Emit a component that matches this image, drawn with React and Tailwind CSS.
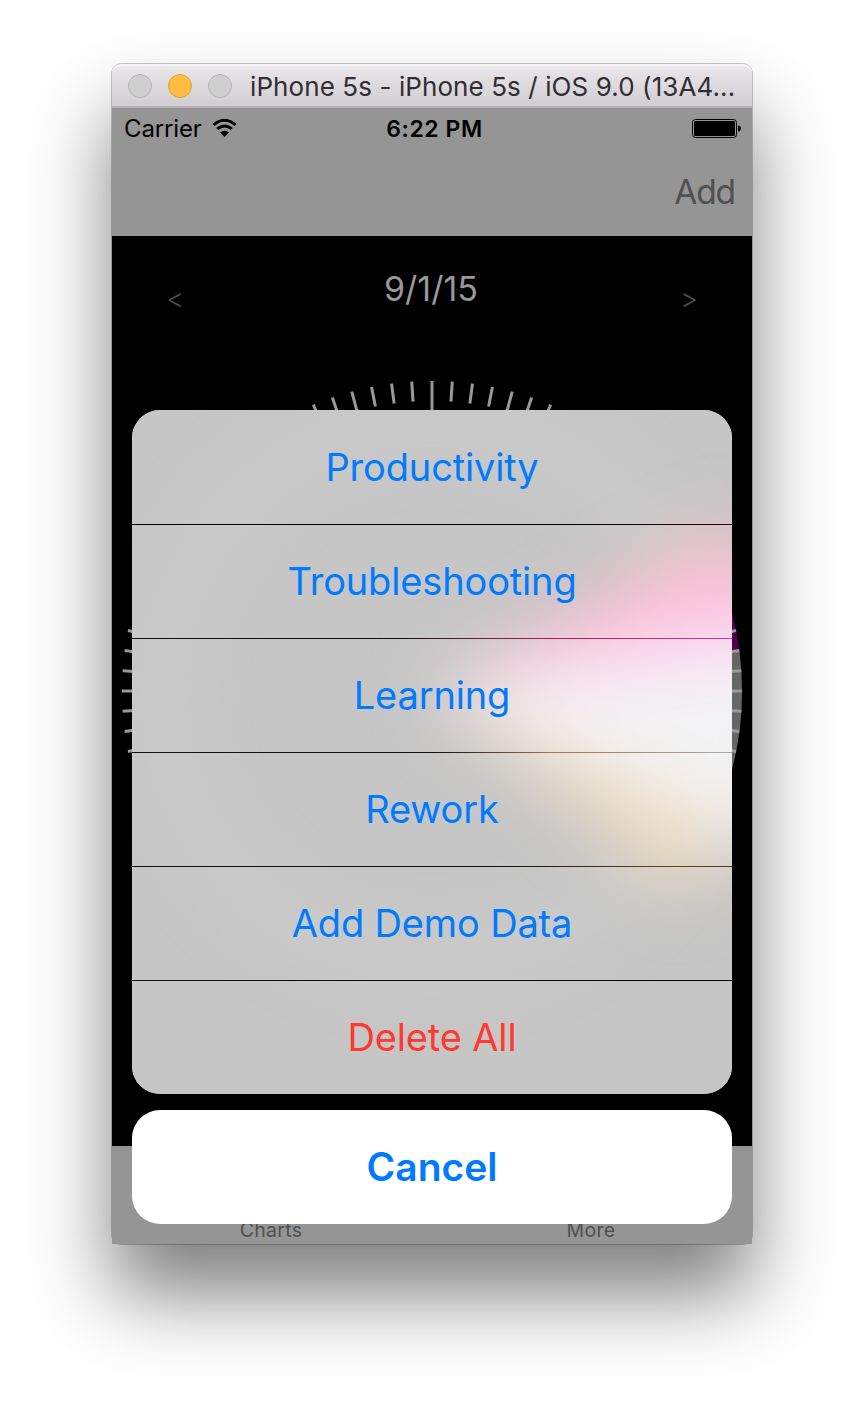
import React from "react";

const CX = 320;
const CY = 455;

function polar(radius, degrees) {
  const a = (degrees * Math.PI) / 180;
  return [CX + radius * Math.cos(a), CY + radius * Math.sin(a)];
}

function wedge(from, to, radius = 310) {
  const [x1, y1] = polar(radius, from);
  const [x2, y2] = polar(radius, to);
  return `M${CX} ${CY}L${x1} ${y1}A${radius} ${radius} 0 0 1 ${x2} ${y2}Z`;
}

function Dial() {
  const ticks = Array.from({ length: 96 }, (_, i) => i);
  return (
    <svg className="absolute inset-0" width="640" height="910" viewBox="0 0 640 910" aria-hidden="true">
      <path d={wedge(-17, -7.5)} fill="#4f004f" />
      <path d={wedge(-7.5, 22)} fill="#666666" />
      {ticks.map((i) => {
        const angle = i * 3.75;
        const [x1, y1] = polar(310, angle);
        const [x2, y2] = polar(i % 24 === 0 ? 270 : 290, angle);
        return <line key={i} x1={x1} y1={y1} x2={x2} y2={y2} stroke="#999999" strokeWidth="3" />;
      })}
    </svg>
  );
}

function SheetBackdrop() {
  return (
    <svg className="absolute inset-0" width="600" height="684" viewBox="20 174 600 684" aria-hidden="true">
      <defs>
        <filter id="soft" x="-50%" y="-60%" width="200%" height="220%">
          <feGaussianBlur stdDeviation="34" />
        </filter>
        <filter id="ring" x="-50%" y="-50%" width="200%" height="200%">
          <feGaussianBlur stdDeviation="26" />
        </filter>
      </defs>
      <rect x="20" y="174" width="600" height="684" fill="#c6c6c6" />
      <circle cx={CX} cy={CY} r="270" fill="none" stroke="#cbcbcb" strokeWidth="50" filter="url(#ring)" />
      <g filter="url(#soft)">
        <path d={wedge(-29, -12, 345)} fill="#ffbfcf" />
        <path d={wedge(-17, -6, 390)} fill="#fdc8ee" />
        <path d={wedge(-8, 27, 370)} fill="#f3f3f4" />
        <path d={wedge(24, 39, 325)} fill="#efdcc0" />
      </g>
    </svg>
  );
}

function SheetAction({ label, className = "text-[#007aff]", line = "" }) {
  return (
    <button
      type="button"
      className={`relative flex h-[114px] w-full items-center justify-center pb-px text-[38px] leading-none font-normal tracking-[-0.15px] ${className}`}
    >
      <span>{label}</span>
      {line && <i className={`absolute inset-x-0 bottom-[-1px] z-10 h-px bg-linear-to-r ${line}`} />}
    </button>
  );
}

export default function App() {
  return (
    <main className="flex h-[1404px] w-[864px] justify-center overflow-hidden bg-white pt-16 font-['Inter',sans-serif]">
      <div className="h-[1180px] w-[640px] rounded-[10px] bg-[#959595] shadow-[0_0_0_1px_rgba(0,0,0,0.22),0_50px_80px_rgba(0,0,0,0.5)]">
        <header className="flex h-11 items-center rounded-t-[9px] border-b-2 border-[#b4b1b4] bg-linear-to-b from-[#ebe8eb] to-[#d1ced1] pt-0.5 pl-4 shadow-[inset_0_2px_0_#f5f4f5]">
          <div className="flex gap-4">
            <i className="size-6 rounded-full border border-[#b4b4b4] bg-[#cfcfcf]" />
            <i className="size-6 rounded-full border border-[#dfa034] bg-[#ffbe41]" />
            <i className="size-6 rounded-full border border-[#b4b4b4] bg-[#cfcfcf]" />
          </div>
          <h1 className="ml-[18px] whitespace-nowrap pt-0.5 text-[26px] leading-8 font-normal tracking-[0.09px] text-[#302e32]">
            iPhone 5s - iPhone 5s / iOS 9.0 (13A4...
          </h1>
        </header>

        <div className="relative h-[1136px]">
          <div className="h-32 bg-[#959595]">
            <div className="grid h-[42px] grid-cols-3 items-center pr-[11px] pl-3 text-black">
              <div className="flex items-center gap-[10px] text-[24px]">
                <span className="tracking-[-0.15px]">Carrier</span>
                <svg width="26" height="20" viewBox="0 0 26 20" fill="none" aria-hidden="true">
                  <path d="M1.500 6C8 -.3 17 -.3 23.500 6" stroke="#000" strokeWidth="3" />
                  <path d="M5.300 10C9.500 5.900 15.500 5.900 19.700 10" stroke="#000" strokeWidth="3" />
                  <path d="M8.200 13.500C10.700 11.200 14.300 11.200 16.800 13.500L12.500 18Z" fill="#000" />
                </svg>
              </div>
              <span className="pl-1 text-center text-[23px] font-semibold tracking-[0.55px]">6:22 PM</span>
              <svg className="justify-self-end" width="49" height="20" viewBox="0 0 49 20" aria-hidden="true">
                <rect x=".5" y=".5" width="44" height="18" rx="3" fill="none" stroke="#000" />
                <rect x="2" y="2" width="41" height="15" rx="1.500" fill="#000" />
                <path d="M46 6.500C50 6.500 50 12.500 46 12.500Z" fill="#000" />
              </svg>
            </div>
            <div className="flex h-[86px] items-center justify-end pr-[17px]">
              <button type="button" className="text-[33.5px] leading-none tracking-[-1.1px] text-[#505050]">Add</button>
            </div>
          </div>

          <section className="relative h-[910px] bg-black">
            <Dial />
            <div className="relative flex items-start justify-between px-[53px] pt-[33px] leading-10">
              <button type="button" className="w-[20px] pt-[10px] text-[27px] leading-10 font-light text-[#505050]">&lt;</button>
              <h2 className="pr-0.5 text-[34px] font-normal text-[#999999]">9/1/15</h2>
              <button type="button" className="w-[20px] pt-[10px] text-[27px] leading-10 font-light text-[#505050]">&gt;</button>
            </div>
          </section>

          <nav className="grid h-[98px] grid-cols-2 items-end bg-[#959595] text-center text-[19.5px] leading-6 tracking-[0.3px] text-[#505050]">
            <span className="pr-0.5 pb-0.5">Charts</span>
            <span className="pr-0.5 pb-0.5">More</span>
          </nav>

          <div className="absolute inset-x-5 bottom-5 flex flex-col gap-4">
            <div className="relative h-[684px] overflow-hidden rounded-[28px] bg-[#c6c6c6]">
              <SheetBackdrop />
              <div className="relative">
                <SheetAction label="Productivity" line="from-black from-60% to-[#350009]" />
                <SheetAction label="Troubleshooting" line="from-[#111111] from-45% via-[#b31856] via-70% to-[#d636a6]" />
                <SheetAction label="Learning" line="from-[#111111] from-50% via-[#a2774d] via-70% to-[#aaa9ab]" />
                <SheetAction label="Rework" line="from-[#111111] from-60% via-[#69430a] via-90% to-[#4c3514]" />
                <SheetAction label="Add Demo Data" line="from-[#111111] to-[#050505]" />
                <SheetAction label="Delete All" className="text-[#ff3830]" />
              </div>
            </div>
            <button
              type="button"
              className="flex h-[114px] items-center justify-center rounded-[28px] bg-white pb-0.5 text-[39px] leading-none font-semibold text-[#007aff]"
            >
              <span>Cancel</span>
            </button>
          </div>
        </div>
      </div>
    </main>
  );
}
